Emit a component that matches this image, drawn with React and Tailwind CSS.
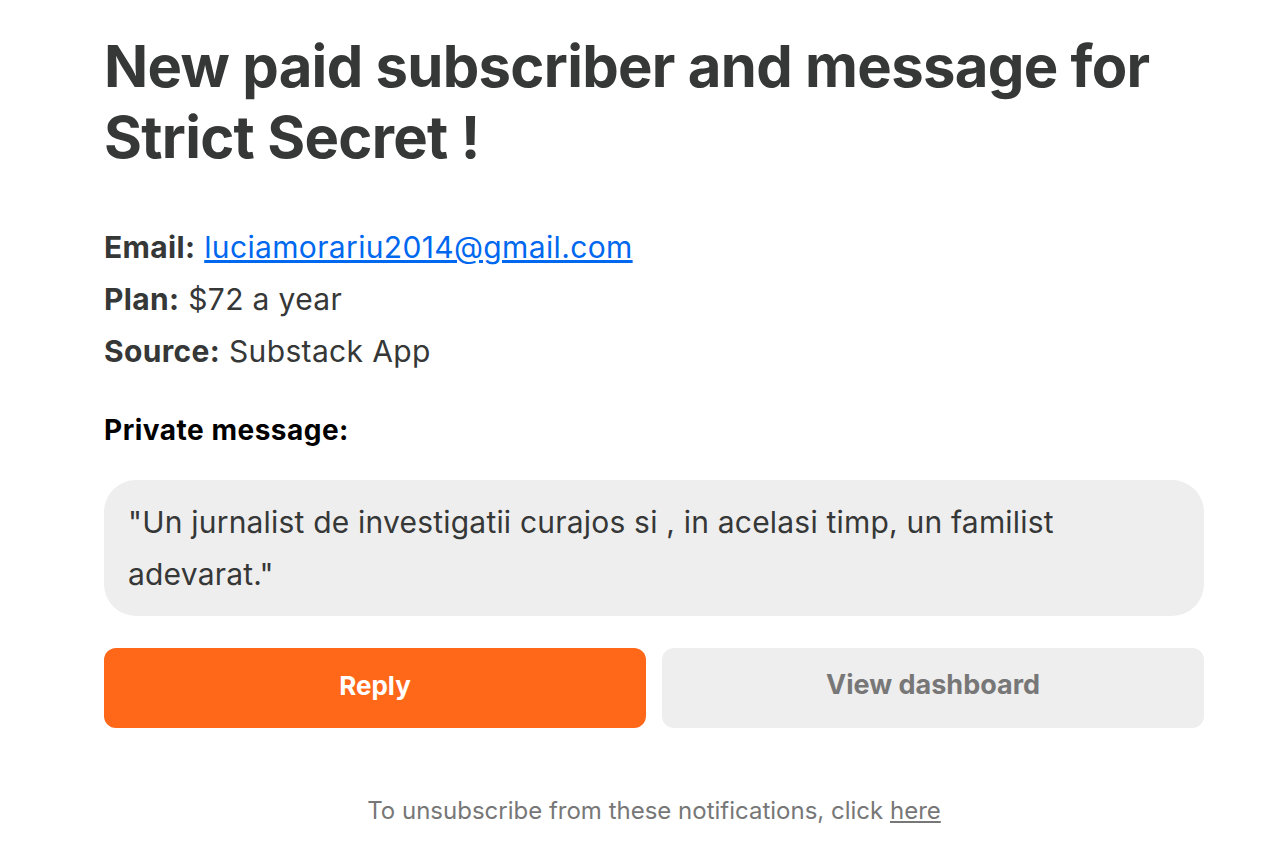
export default function App() {
  return (
    <div className="min-h-screen bg-white" style={{ fontFamily: "Inter, 'Noto Sans', sans-serif" }}>
      <div className="w-[1100px] ml-[104px] pt-[31px]">
        <h1 className="text-[58px] leading-[71px] font-bold text-[#363737] tracking-[-0.7px]">
          New paid subscriber and message for Strict Secret !
        </h1>
        <div className="mt-[48px] text-[30px] leading-[52px] text-[#363737] tracking-[0.35px]">
          <div>
            <span className="font-bold">Email:</span>{" "}
            <a href="#" className="text-[#0068ef] underline">luciamorariu2014@gmail.com</a>
          </div>
          <div>
            <span className="font-bold">Plan:</span> $72 a year
          </div>
          <div>
            <span className="font-bold">Source:</span> Substack App
          </div>
        </div>
        <div className="mt-[27px] text-[28px] leading-[52px] font-bold text-black tracking-[0.5px]">Private message:</div>
        <div className="mt-[24px] bg-[#eeeeee] rounded-[32px] px-6 py-4 text-[30px] leading-[52px] text-[#363737] tracking-[0.2px]">
          "Un jurnalist de investigatii curajos si , in acelasi timp, un familist adevarat."
        </div>
        <div className="mt-[32px] grid grid-cols-2 gap-4">
          <button className="h-[80px] pb-[6px] rounded-[12px] bg-[#ff6719] text-white text-[26px] font-bold">Reply</button>
          <button className="h-[80px] pb-[6px] rounded-[12px] bg-[#eeeeee] text-[#777777] text-[27px] font-bold">View dashboard</button>
        </div>
        <div className="mt-[68px] text-center text-[24px] leading-[30px] text-[#777777]">
          To unsubscribe from these notifications, click <a href="#" className="underline text-[#777777]">here</a>
        </div>
      </div>
    </div>
  );
}
